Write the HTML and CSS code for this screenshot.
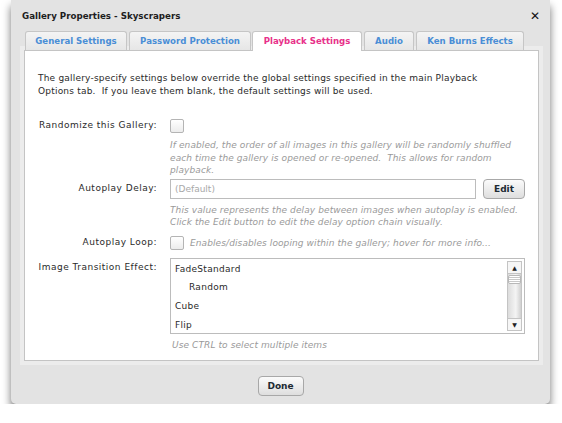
FILE: index.html
```html
<!DOCTYPE html>
<html lang="en">
<head>
  <meta charset="UTF-8">
  <title>Gallery Properties</title>
  <link rel="stylesheet" href="styles.css">
</head>
<body>
  <div class="dialog">
    <div class="titlebar">
      <span class="title">Gallery Properties - Skyscrapers</span>
      <span class="close">&#10005;</span>
    </div>

    <div class="tabs">
      <div class="tab t1">General Settings</div>
      <div class="tab t2">Password Protection</div>
      <div class="tab active t3">Playback Settings</div>
      <div class="tab t4">Audio</div>
      <div class="tab t5">Ken Burns Effects</div>
    </div>

    <div class="panel">
      <p class="intro">The gallery-specify settings below override the global settings specified in the main Playback Options tab.&nbsp; If you leave them blank, the default settings will be used.</p>

      <div class="row row-rand">
        <label class="lbl">Randomize this Gallery:</label>
        <div class="ctl"><span class="check"></span></div>
      </div>
      <p class="help help-rand">If enabled, the order of all images in this gallery will be randomly shuffled each time the gallery is opened or re-opened.&nbsp; This allows for random playback.</p>

      <div class="row row-delay">
        <label class="lbl">Autoplay Delay:</label>
        <div class="ctl delay">
          <span class="input">(Default)</span>
          <span class="btn">Edit</span>
        </div>
      </div>
      <p class="help help-delay">This value represents the delay between images when autoplay is enabled. Click the Edit button to edit the delay option chain visually.</p>

      <div class="row row-loop">
        <label class="lbl">Autoplay Loop:</label>
        <div class="ctl"><span class="check"></span><span class="hint">Enables/disables looping within the gallery; hover for more info...</span></div>
      </div>

      <div class="row row-fx">
        <label class="lbl lbl-fx">Image Transition Effect:</label>
        <div class="ctl">
          <div class="listbox">
            <ul class="items">
              <li>FadeStandard</li>
              <li class="sub">Random</li>
              <li>Cube</li>
              <li>Flip</li>
            </ul>
            <div class="scrollbar">
              <span class="arrow up">&#9650;</span>
              <span class="track"><span class="thumb"></span></span>
              <span class="arrow down">&#9660;</span>
            </div>
          </div>
        </div>
      </div>
      <p class="help help-ctrl">Use CTRL to select multiple items</p>
    </div>

    <div class="footer">
      <span class="btn done">Done</span>
    </div>
  </div>
</body>
</html>
```

FILE: styles.css
```css
body {
  margin: 0;
  background-color: #ffffff;
  font-family: 'DejaVu Sans', Verdana, sans-serif;
  font-size: 9px;
  color: #222;
}
.dialog {
  margin-left: 11px;
  width: 539px;
  height: 404px;
  background-color: #e3e3e3;
  border-radius: 0 0 5px 5px;
  box-shadow: 0 6px 9px rgba(0, 0, 0, 0.55);
  display: flex;
  flex-direction: column;
}
.titlebar {
  height: 31px;
  display: flex;
  align-items: center;
  justify-content: space-between;
  padding: 0 10px 0 11px;
}
.title {
  font-weight: bold;
  font-size: 8.7px;
  color: #1e1e1e;
}
.close {
  font-weight: bold;
  font-size: 12px;
  color: #111;
}
.tabs {
  display: flex;
  padding-left: 14px;
  gap: 2px;
  height: 19px;
  position: relative;
  z-index: 1;
}
.tab {
  height: 18px;
  line-height: 18px;
  border: 1px solid #c6c6c6;
  border-bottom: none;
  border-radius: 3px 3px 0 0;
  background: linear-gradient(#f4f4f4, #e6e6e6);
  color: #4a8ed6;
  font-weight: bold;
  font-size: 8.6px;
  text-align: center;
}
.t1 { width: 100px; }
.t2 { width: 120px; }
.t3 { width: 108px; }
.t4 { width: 48px; }
.t5 { width: 106px; }
.tab.active {
  background: #ffffff;
  color: #e8318a;
  height: 19px;
  margin-left: -1px;
}
.panel {
  margin: 0 11px 0 13px;
  height: 309px;
  background-color: #ffffff;
  border: 1px solid #c4c4c4;
  outline: 4px solid #ececec;
  padding: 0 13px;
}
.intro {
  margin: 21px 0 0;
  max-width: 452px;
  line-height: 13px;
  letter-spacing: 0.2px;
  color: #2a2a2a;
}
.row {
  display: flex;
  align-items: flex-start;
}
.lbl {
  width: 119px;
  text-align: right;
  padding-right: 13px;
  letter-spacing: 0.5px;
  line-height: 13px;
  color: #2a2a2a;
  white-space: nowrap;
}
.ctl {
  display: flex;
  align-items: center;
  flex: 1;
}
.check {
  width: 12px;
  height: 12px;
  border: 1px solid #b4b4b4;
  border-radius: 2px;
  background: linear-gradient(#ffffff, #ececec);
}
.help {
  margin: 6px 0 0 132px;
  font-style: italic;
  color: #9a9a9a;
  line-height: 12.5px;
  letter-spacing: 0.1px;
}
.row-rand { margin-top: 21px; }
.row-delay { margin-top: 2px; }
.delay {
  gap: 7px;
}
.input {
  width: 300px;
  height: 18px;
  line-height: 18px;
  border: 1px solid #bcbcbc;
  padding-left: 4px;
  color: #a8a8a8;
}
.btn {
  display: inline-block;
  width: 40px;
  height: 18px;
  line-height: 18px;
  border: 1px solid #a8a8a8;
  border-radius: 4px;
  background: linear-gradient(#fbfbfb, #dedede);
  text-align: center;
  font-weight: bold;
  color: #1c2a33;
}
.row-delay .lbl { padding-top: 3px; }
.help-delay { margin-top: 5px; }
.row-loop { margin-top: 7px; }
.hint {
  margin-left: 6px;
  font-style: italic;
  color: #9a9a9a;
  letter-spacing: 0.1px;
}
.row-fx { margin-top: 8px; }
.lbl-fx { padding-top: 3px; }
.listbox {
  width: 353px;
  height: 74px;
  border: 1px solid #bcbcbc;
  display: flex;
}
.items {
  list-style: none;
  margin: 0;
  padding: 1px 0 0 4px;
  flex: 1;
}
.items li {
  height: 18.7px;
  line-height: 18px;
  letter-spacing: 0.3px;
  color: #2a2a2a;
}
.items li.sub { padding-left: 14px; }
.scrollbar {
  width: 13px;
  margin: 2px 2px 2px 0;
  display: flex;
  flex-direction: column;
  border: 1px solid #c4c4c4;
}
.arrow {
  height: 11px;
  font-size: 6px;
  line-height: 11px;
  text-align: center;
  color: #222;
  background: #f6f6f6;
}
.track {
  flex: 1;
  background: linear-gradient(90deg, #dcdcdc, #f4f4f4 60%, #d0d0d0);
  border-top: 1px solid #c4c4c4;
  border-bottom: 1px solid #c4c4c4;
}
.thumb {
  display: block;
  height: 7px;
  margin-top: 1px;
  background: repeating-linear-gradient(#ffffff 0 1px, #c8c8c8 1px 2px);
  border: 1px solid #b8b8b8;
  border-radius: 2px;
}
.help-ctrl { margin: 5px 0 0 134px; }
.footer {
  flex: 1;
  display: flex;
  justify-content: center;
  align-items: center;
  padding-top: 6px;
}
.done {
  width: 44px;
}
```
